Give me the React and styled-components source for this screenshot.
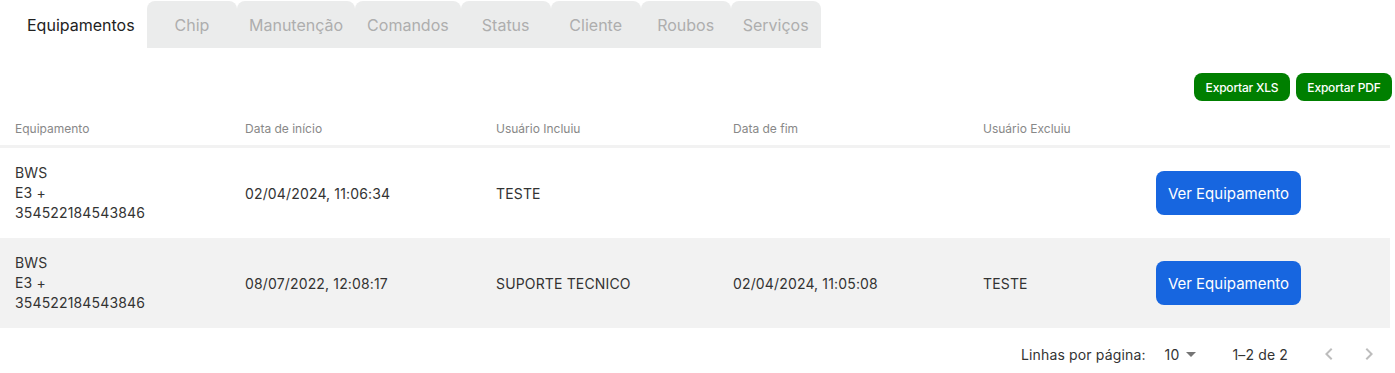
import React from "react"
import styled, { createGlobalStyle } from "styled-components"

const GlobalStyle = createGlobalStyle`
  body {
    margin: 0;
    background: #fff;
    font-family: Inter, "Noto Sans", sans-serif;
    color: #333;
  }
`

const tabs = ["Equipamentos", "Chip", "Manutenção", "Comandos", "Status", "Cliente", "Roubos", "Serviços"]

const columns = ["Equipamento", "Data de início", "Usuário Incluiu", "Data de fim", "Usuário Excluiu", ""]

const rows = [
  { equip: ["BWS", "E3 +", "354522184543846"], inicio: "02/04/2024, 11:06:34", incluiu: "TESTE", fim: "", excluiu: "" },
  { equip: ["BWS", "E3 +", "354522184543846"], inicio: "08/07/2022, 12:08:17", incluiu: "SUPORTE TECNICO", fim: "02/04/2024, 11:05:08", excluiu: "TESTE" },
]

const App = () => {
  return (
    <Page>
      <GlobalStyle />
      <TabBar>
        {tabs.map((t, i) => (
          <Tab key={t} $active={i === 0}>{t}</Tab>
        ))}
      </TabBar>
      <Toolbar>
        <ExportButton>Exportar XLS</ExportButton>
        <ExportButton>Exportar PDF</ExportButton>
      </Toolbar>
      <Table>
        <HeadRow>
          {columns.map((c, i) => (
            <HeadCell key={i}>{c}</HeadCell>
          ))}
        </HeadRow>
        {rows.map((r, i) => (
          <Row key={i} $striped={i % 2 === 1}>
            <Cell>
              <Stack>
                {r.equip.map(l => <span key={l}>{l}</span>)}
              </Stack>
            </Cell>
            <Cell>{r.inicio}</Cell>
            <Cell>{r.incluiu}</Cell>
            <Cell>{r.fim}</Cell>
            <Cell>{r.excluiu}</Cell>
            <Cell>
              <ViewButton>Ver Equipamento</ViewButton>
            </Cell>
          </Row>
        ))}
      </Table>
      <Pagination>
        <PageLabel>Linhas por página:</PageLabel>
        <PerPage>
          10
          <svg width="10" height="5" viewBox="0 0 10 5"><path d="M0 0 L10 0 L5 5 Z" fill="#757575" /></svg>
        </PerPage>
        <PageRange>1–2 de 2</PageRange>
        <NavButton>
          <svg width="24" height="24" viewBox="0 0 24 24"><path d="M15.41 7.41 14 6l-6 6 6 6 1.41-1.41L10.83 12z" fill="#bdbdbd" /></svg>
        </NavButton>
        <NavButton>
          <svg width="24" height="24" viewBox="0 0 24 24"><path d="M10 6 8.59 7.41 13.17 12l-4.58 4.59L10 18l6-6z" fill="#bdbdbd" /></svg>
        </NavButton>
      </Pagination>
    </Page>
  )
}

const Page = styled.div`
  width: 1395px;
  display: flex;
  flex-direction: column;`

const TabBar = styled.div`
  display: flex;
  margin-top: 1px;
  height: 47px;`

const Tab = styled.div`
  min-width: 90px;
  width: ${p => p.$active ? "147px" : "auto"};
  box-sizing: border-box;
  padding: ${p => p.$active ? "0 12px 0 27px" : "0 12px"};
  display: flex;
  align-items: center;
  justify-content: ${p => p.$active ? "flex-start" : "center"};
  font-size: 16px;
  color: ${p => p.$active ? "#222" : "#aeaeae"};
  background: ${p => p.$active ? "#fff" : "#ebecec"};
  border-radius: 8px 8px 0 0;`

const Toolbar = styled.div`
  display: flex;
  justify-content: flex-end;
  gap: 6px;
  padding: 25px 3px 0 0;
  height: 28px;`

const ExportButton = styled.button`
  height: 28px;
  padding: 0;
  border: none;
  border-radius: 8px;
  background: #007f00;
  color: #fff;
  font-family: Inter, sans-serif;
  font-size: 12px;
  font-weight: 500;
  letter-spacing: -0.2px;
  width: 96px;`

const Table = styled.div`
  margin-top: 9px;
  width: 1390px;
  display: flex;
  flex-direction: column;`

const grid = `
  display: grid;
  grid-template-columns: 230px 251px 237px 250px 173px 1fr;`

const HeadRow = styled.div`
  ${grid}
  height: 35px;
  align-items: center;
  border-bottom: 3px solid #f2f2f2;`

const HeadCell = styled.div`
  padding: 2px 0 0 15px;
  font-size: 12px;
  color: #888;`

const Row = styled.div`
  ${grid}
  height: 90px;
  align-items: center;
  background: ${p => p.$striped ? "#f2f2f2" : "#fff"};`

const Cell = styled.div`
  padding-left: 15px;
  font-size: 14px;
  letter-spacing: 0.15px;
  color: #333;`

const Stack = styled.div`
  display: flex;
  flex-direction: column;
  line-height: 20px;`

const ViewButton = styled.button`
  width: 145px;
  height: 44px;
  border: none;
  border-radius: 8px;
  background: #1766e0;
  color: #fff;
  font-family: Inter, sans-serif;
  font-size: 15px;`

const Pagination = styled.div`
  display: flex;
  align-items: center;
  justify-content: flex-end;
  height: 52px;
  padding-right: 6px;
  font-size: 14px;
  letter-spacing: 0.15px;
  color: #333;`

const PageLabel = styled.span`
  margin-right: 19px;`

const PerPage = styled.span`
  display: flex;
  align-items: center;
  gap: 7px;
  margin-right: 36px;`

const PageRange = styled.span`
  margin-right: 21px;`

const NavButton = styled.span`
  display: flex;
  width: 40px;
  justify-content: center;`

export default App
